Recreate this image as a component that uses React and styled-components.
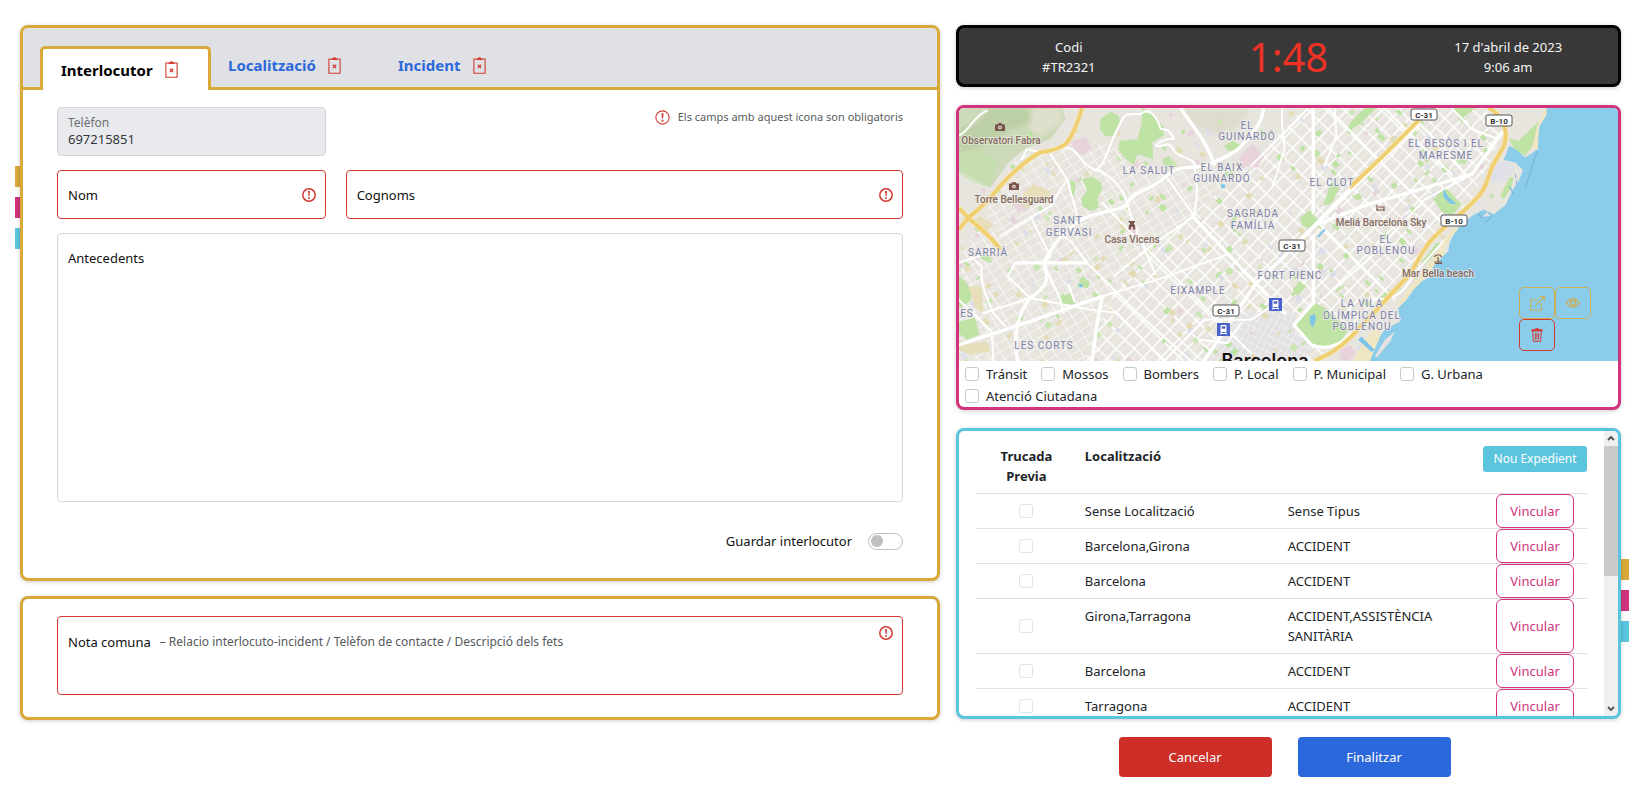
import React from "react";
import styled, { createGlobalStyle, css } from "styled-components";

const gold = "#d9a93b";
const pink = "#d1337c";
const cyan = "#5bc5de";
const red = "#d23a31";
const blue = "#2b68db";

const Global = createGlobalStyle`
  *, *::before, *::after { box-sizing: border-box; }
  body {
    margin: 0;
    background: #fff;
    color: #212529;
    font-family: "Noto Sans", "Open Sans", sans-serif;
    font-size: 13px;
    line-height: 20px;
  }
  button, input, textarea { font: inherit; color: inherit; }
  button { cursor: pointer; }
`;

/* ---------- page ---------- */

const Page = styled.div`
  position: relative;
  display: grid;
  grid-template-columns: 920fr 665fr;
  align-items: start;
  gap: 16px;
  padding: 25px 11px 20px 20px;
`;

const Column = styled.div`
  display: flex;
  flex-direction: column;
  gap: ${(p) => p.$gap}px;
  min-width: 0;
`;

const Panel = styled.section`
  border: 3px solid ${(p) => p.$color};
  border-radius: 8px;
  background: #fff;
  box-shadow: 0 1px 4px rgba(0, 0, 0, 0.2);
  overflow: hidden;
`;

const Handles = styled.nav`
  position: absolute;
  z-index: -1;
  display: flex;
  flex-direction: column;
  gap: 10px;
  ${(p) =>
    p.$side === "left"
      ? css`left: 15px; top: 166px;`
      : css`right: 3px; top: 559px;`}
`;

const Handle = styled.button`
  width: 12px;
  height: 21px;
  padding: 0;
  border: 0;
  background: ${(p) => p.$color};
`;

/* ---------- tabs ---------- */

const TabBar = styled.div`
  display: flex;
  align-items: flex-end;
  padding: 18px 17px 0;
  background: #e0e1e5;
  border-bottom: 3px solid ${gold};
`;

const Tab = styled.button`
  display: flex;
  align-items: center;
  gap: 12px;
  width: 170px;
  height: 41px;
  padding: 0 0 3px 17px;
  border: 0;
  background: none;
  color: ${blue};
  font-size: 15px;
  font-weight: 700;
  white-space: nowrap;
  ${(p) =>
    p.$active &&
    css`
      width: 171px;
      height: 44px;
      margin-bottom: -3px;
      padding: 0 0 0 18px;
      border: 3px solid ${gold};
      border-bottom: 0;
      border-radius: 5px 5px 0 0;
      background: #fff;
      color: #000;
    `}
`;

/* ---------- form ---------- */

const Form = styled.form`
  display: grid;
  grid-template-columns: repeat(12, 1fr);
  gap: 14px 20px;
  padding: 17px 34px 27px;
`;

const Cell = styled.div`
  grid-column: span ${(p) => p.$span};
  min-width: 0;
`;

const Notice = styled.p`
  display: flex;
  justify-content: flex-end;
  align-items: center;
  gap: 8px;
  margin: 0;
  color: #585b5f;
  font-size: 11px;
`;

const fieldBox = css`
  border: 1px solid ${(p) => (p.$required ? red : "#d4d6da")};
  border-radius: 4px;
  background: ${(p) => (p.$filled ? "#e9eaee" : "#fff")};
`;

const LineField = styled.div`
  ${fieldBox}
  display: flex;
  align-items: center;
  gap: 8px;
  height: 49px;
  padding: 0 9px 0 10px;
`;

const StackField = styled.div`
  ${fieldBox}
  display: flex;
  flex-direction: column;
  height: 49px;
  padding: 7px 10px 0;
`;

const AreaField = styled.div`
  ${fieldBox}
  display: flex;
  flex-direction: column;
  height: ${(p) => p.$height}px;
  padding: ${(p) => p.$top}px 9px 8px 10px;
`;

const AreaHead = styled.div`
  display: flex;
  align-items: flex-start;
  gap: 9px;
`;

const NoteHead = styled.div`
  display: flex;
  flex: 1;
  align-items: center;
  gap: 9px;
  padding-top: 6px;
`;

const Label = styled.label`
  color: ${(p) => (p.$floating ? "#6c6f75" : "#111")};
  font-size: ${(p) => (p.$floating ? 12 : 13)}px;
  line-height: ${(p) => (p.$floating ? 16 : 20)}px;
  white-space: nowrap;
`;

const Hint = styled.span`
  flex: 1;
  color: #55585c;
  font-size: 12px;
`;

const Entry = styled.input`
  flex: 1;
  min-width: 0;
  padding: 0;
  border: 0;
  outline: 0;
  background: none;
`;

const PhoneEntry = styled(Entry)`
  flex: none;
  height: 16px;
  color: #33363a;
  line-height: 16px;
`;

const Area = styled.textarea`
  flex: 1;
  padding: 0;
  border: 0;
  outline: 0;
  resize: none;
  background: none;
`;

const SwitchRow = styled.label`
  grid-column: 1 / -1;
  display: flex;
  justify-content: flex-end;
  align-items: center;
  gap: 16px;
  padding-top: 15px;
  color: #111;
`;

const Switch = styled.input`
  appearance: none;
  display: flex;
  align-items: center;
  width: 35px;
  height: 17px;
  margin: 0;
  padding: 0 2px;
  border: 1px solid #bfbfbf;
  border-radius: 9px;
  background: #fff;
  &::before {
    content: "";
    width: 12px;
    height: 12px;
    border-radius: 50%;
    background: #bfbfbf;
  }
  &:checked { justify-content: flex-end; }
`;

const NoteForm = styled.form`
  padding: 17px 34px 22px;
`;

/* ---------- call header ---------- */

const CallPanel = styled(Panel)`
  display: grid;
  grid-template-columns: repeat(3, 1fr);
  align-items: center;
  height: 62px;
  padding-top: 2px;
  background: #383838;
  color: #f4f4f4;
  text-align: center;
`;

const CallInfo = styled.div`
  display: flex;
  flex-direction: column;
`;

const Timer = styled.div`
  color: #ed3124;
  font-size: 40px;
  line-height: 48px;
`;

/* ---------- map ---------- */

const MapFrame = styled.div`
  position: relative;
  height: 253px;
`;

const MapSvg = styled.svg`
  display: block;
  width: 100%;
  height: 100%;
`;

const District = styled.text`
  font-family: Roboto, sans-serif;
  font-size: 10px;
  letter-spacing: 1px;
  text-anchor: middle;
  fill: #7a80a8;
  stroke: #f1efeb;
  stroke-width: 2px;
  stroke-opacity: 0.7;
  paint-order: stroke;
`;

const Poi = styled.text`
  font-family: Roboto, sans-serif;
  font-size: 10px;
  font-weight: 500;
  text-anchor: middle;
  fill: #856a60;
  stroke: #f1efeb;
  stroke-width: 2px;
  stroke-opacity: 0.6;
  paint-order: stroke;
`;

const City = styled.text`
  font-family: Inter, sans-serif;
  font-size: 18px;
  font-weight: 600;
  text-anchor: middle;
  fill: #111;
`;

const RoadSign = styled.text`
  font-family: Roboto, sans-serif;
  font-size: 8px;
  font-weight: 700;
  text-anchor: middle;
  fill: #333;
`;

const MapTools = styled.div`
  position: absolute;
  right: 27px;
  bottom: 10px;
  display: grid;
  grid-template-columns: 36px 36px;
`;

const ToolButton = styled.button`
  display: flex;
  align-items: center;
  justify-content: center;
  height: 32px;
  padding: 0;
  border: 1px solid ${(p) => p.$color};
  border-radius: 5px;
  background: none;
  color: ${(p) => p.$color};
`;

const Checks = styled.div`
  display: flex;
  flex-wrap: wrap;
  gap: 0 14px;
  padding: 2px 6px 0;
`;

const CheckLabel = styled.label`
  display: flex;
  align-items: center;
  gap: 7px;
  height: 22px;
  white-space: nowrap;
`;

const Box = styled.input`
  appearance: none;
  display: block;
  flex: none;
  width: 14px;
  height: 14px;
  margin: 0;
  border: 1px solid ${(p) => (p.$light ? "#e2e3e5" : "#c8c9cb")};
  border-radius: 3px;
  background: #fff;
  &:checked { background: ${blue}; }
`;

/* ---------- table ---------- */

const ListPanel = styled(Panel)`
  display: flex;
  height: 291px;
`;

const ListBody = styled.div`
  flex: 1;
  padding: 0 17px;
  overflow: hidden;
`;

const Table = styled.table`
  width: 100%;
  table-layout: fixed;
  border-collapse: separate;
  border-spacing: 0;
`;

const Col = styled.col`
  width: ${(p) => p.$w}%;
`;

const Th = styled.th`
  padding: ${(p) => (p.$action ? "15px 0 0" : "15px 8px 7px")};
  border-bottom: 1px solid #dfe1e4;
  text-align: ${(p) => (p.$center ? "center" : "left")};
  vertical-align: top;
`;

const Td = styled.td`
  height: 1px;
  padding: ${(p) => (p.$action ? "0 13px" : "7px 8px")};
  border-bottom: 1px solid #dfe1e4;
  vertical-align: ${(p) => (p.$middle ? "middle" : "top")};
`;

const CellBox = styled(Box)`
  margin: 0 auto;
`;

const LinkButton = styled.button`
  display: block;
  width: 100%;
  height: 100%;
  min-height: 34px;
  padding: 0;
  border: 1px solid ${pink};
  border-radius: 6px;
  background: #fff;
  color: ${pink};
`;

const NewButton = styled.button`
  display: block;
  width: 100%;
  height: 26px;
  padding: 0;
  border: 0;
  border-radius: 3px;
  background: ${cyan};
  color: #fff;
  font-size: 12px;
  font-weight: 400;
`;

const ScrollTrack = styled.div`
  display: flex;
  flex-direction: column;
  width: 14px;
  background: #f0f0f0;
`;

const ScrollThumb = styled.div`
  height: 130px;
  margin-bottom: auto;
  background: #cacaca;
`;

const ScrollArrow = styled.svg`
  display: block;
  width: 14px;
  height: 15px;
`;

const Actions = styled.div`
  display: flex;
  justify-content: center;
  gap: 26px;
  padding-right: 8px;
`;

const ActionButton = styled.button`
  width: 153px;
  height: 40px;
  border: 0;
  border-radius: 4px;
  background: ${(p) => p.$color};
  color: #fff;
`;

/* ---------- icons ---------- */

const ClipboardX = () => (
  <svg width="13" height="17" viewBox="0 0 13 17" fill="none" stroke={red} aria-hidden="true">
    <path d="M3 2H.9v14.2h11.2V2H10" strokeWidth="1.1" />
    <path d="M3.2 1.2h1.9L5.6.3h1.8l.5.9h1.9v1.9H3.2z" fill={red} stroke="none" />
    <path d="M4.900 7.700l3.200 3.400M8.100 7.700l-3.200 3.400" strokeWidth="1.300" />
  </svg>
);

const Alert = ({ size = 14, weight = 1.5 }) => (
  <svg width={size} height={size} viewBox="0 0 14 14" fill="none" stroke={red} aria-hidden="true">
    <circle cx="7" cy="7" r="6.200" strokeWidth={weight} />
    <path d="M6 3h2l-.5 5h-1z" fill={red} stroke="none" />
    <circle cx="7" cy="10" r="1" fill={red} stroke="none" />
  </svg>
);

const OpenIcon = () => (
  <svg width="15" height="15" viewBox="0 0 14 14" fill="none" stroke="currentColor" aria-hidden="true">
    <path d="M7.500 3.500H.7v9.800h9.900V6.500M5 9L13 1M9 .6h4.400V5" />
  </svg>
);

const EyeIcon = () => (
  <svg width="14" height="10" viewBox="0 0 14 10" fill="none" stroke="currentColor" aria-hidden="true">
    <path d="M.6 5C2.200 2.300 4.400 .8 7 .8S11.800 2.300 13.400 5C11.800 7.700 9.600 9.200 7 9.200S2.200 7.700 .6 5z" strokeWidth="1.200" />
    <circle cx="7" cy="5" r="2.600" strokeWidth="1.500" />
  </svg>
);

const TrashIcon = () => (
  <svg width="12" height="14" viewBox="0 0 12 14" fill="none" stroke="currentColor" aria-hidden="true">
    <path d="M.5 1.200h3.500L4.500 .2h3l.5 1h3.500V3.500H.5z" fill="currentColor" stroke="none" />
    <path d="M1.800 3l.5 10.300h7.400L10.200 3M4.400 5v6.500M6 5v6.500M7.600 5v6.500" />
  </svg>
);

/* ---------- map drawing ---------- */

const makePatches = () => {
  let seed = 7;
  const rnd = () => {
    seed = (seed * 16807) % 2147483647;
    return seed / 2147483647;
  };
  const fills = ["#bfe2a5", "#bfe2a5", "#bfe2a5", "#c9e6b3", "#e4dcb6", "#e4dcb6", "#e6d3dc", "#dcdeea"];
  return Array.from({ length: 420 }, (_, i) => ({
    key: i,
    x: 30 + rnd() * 1620,
    y: 30 + rnd() * 750,
    w: 6 + rnd() * 16,
    h: 6 + rnd() * 14,
    fill: fills[Math.floor(rnd() * fills.length)],
  }));
};
const patches = makePatches();

const parks = [
  "M450 60L480 38L505 50L508 75L490 110L465 112L448 90z",
  "M575 27L600 40L640 85L638 110L605 130L608 180L560 165L550 197L520 175L503 150L508 125L560 120L572 75z",
  "M396 240L425 232L452 250L455 270L440 300L445 325L420 335L395 320L392 295L410 275z",
  "M360 240L375 250L372 290L362 285z",
  "M26 530C55 545 70 580 60 605L30 625L26 620z",
  "M26 665L75 655L88 705L50 720L26 700z",
  "M378 560L398 530L418 548L412 565z",
  "M1028 675L1088 607L1120 625L1190 690L1175 715C1150 745 1100 745 1080 733z",
  "M1045 355L1075 333L1100 360L1075 388L1055 380z",
  "M1115 320L1140 245L1165 262L1142 312z",
  "M1445 300L1480 262L1530 315L1500 350L1470 338z",
  "M1670 118L1700 125L1760 66L1765 75L1738 145L1720 170L1690 155z",
  "M1408 490L1455 430L1470 430L1440 475L1420 495z",
  "M1645 290L1672 235L1685 235L1678 265L1655 300z",
  "M1025 570L1045 545L1065 560L1040 590z",
  "M1500 27L1570 27L1530 60z",
  "M820 140L845 125L870 140L860 155L830 155z",
  "M1185 95L1200 65L1240 27L1275 27L1220 80z",
  "M330 595L360 580L375 612L335 620z",
  "M1280 600L1310 570L1330 580L1300 615z",
  "M225 105L245 95L250 140L232 135z",
  "M85 455L120 470L125 490L95 480z",
  "M635 180L655 170L668 195L645 212z",
];

const tans = [
  "M220 280L250 255L300 275L295 305L260 300L230 330L210 310z",
  "M60 370L90 350L130 375L100 405z",
  "M26 735L110 725L120 755L60 765L26 750z",
  "M55 560L95 560L100 640L75 625z",
  "M1630 600L1650 590L1655 610z",
];

const pinks = [
  "M360 130L405 112L425 145L400 168L375 155z",
  "M865 175L905 135L938 170L920 205L870 200z",
  "M185 310L215 315L230 330L205 340z",
  "M1165 750L1195 735L1215 760L1190 783L1170 780z",
  "M90 265L110 270L100 285z",
];

const highways = [
  "M395 27C385 60 370 110 345 135C320 155 290 155 270 160C240 175 190 215 150 260C120 300 80 335 55 355L26 390",
  "M26 325L55 355C80 380 125 410 150 450",
  "M1405 60L1290 175L1195 265",
  "M1610 27C1640 40 1658 70 1662 105C1662 145 1645 155 1622 200C1603 240 1610 265 1560 312C1500 370 1450 400 1425 440C1395 480 1390 510 1360 540C1320 580 1250 660 1200 710C1160 750 1130 765 1090 783",
];

const avenues = [
  "M395 360C430 340 500 335 525 318C550 270 600 275 640 235C690 190 730 212 770 197C810 180 860 160 880 130C920 90 935 60 937 27",
  "M690 27C720 80 760 110 790 195",
  "M195 490L410 490",
  "M26 735L240 665L455 590",
  "M240 595C200 640 188 720 202 783",
  "M240 595C290 560 300 540 280 490C300 450 330 400 395 360",
  "M455 590L438 680L425 783",
  "M1086 27L1086 340M1086 410L1086 610",
  "M725 350L870 505L1000 640",
  "M990 480L1110 360L1400 75",
  "M1110 370L1250 315L1560 225L1650 100",
  "M1028 675L1088 607M1028 675L1080 735C1110 748 1160 748 1200 700",
  "M760 783L915 550L1000 470L1350 110L1430 27",
];

const streets = [
  "M435 215C470 190 475 130 510 72C520 40 540 45 570 45C600 20 620 60 630 90C660 90 665 110 670 120C650 115 620 130 615 140C640 145 655 120 670 155C690 180 720 170 735 200",
  "M345 145C380 145 385 190 430 210C470 220 520 260 530 315L560 400L615 525",
  "M26 110C60 95 70 50 110 35",
  "M345 145C330 155 270 165 230 150L215 180",
  "M455 590L620 540L830 465",
  "M100 640L240 595L420 630L500 640L640 783",
  "M300 165L350 240L380 345",
  "M410 490L365 430L330 400",
  "M60 470L95 500C90 560 110 590 130 640L165 680",
  "M26 600L125 695L130 783",
  "M145 455L100 465L26 490",
  "M240 350L300 470L280 490",
  "M150 410L240 355L300 320L350 240",
  "M195 490L172 530L240 595",
  "M280 490L330 600L340 640",
  "M730 200C745 270 735 310 730 350L600 440L490 530",
  "M645 230L730 350",
  "M640 783L760 660L900 660L960 620",
  "M995 27C985 60 1000 120 1000 150L965 260",
  "M1150 27L1155 110L1120 200",
  "M900 200L1020 80L1070 27",
  "M355 555L372 605",
  "M410 490L560 640L720 783",
  "M455 310L600 460L740 600L900 760",
  "M1300 27L1420 150L1500 225",
  "M1390 60L1480 150L1540 225",
  "M1500 27L1560 90L1640 120",
  "M1130 27L1250 150L1400 300L1470 370",
  "M1100 370L1240 510L1330 600",
  "M1110 600L1250 480L1420 300L1560 225",
  "M1250 600C1330 600 1350 590 1390 520L1480 420",
  "M745 720L830 730L870 670",
];

const sea =
  "M1785 27L1780 45L1755 80L1758 105L1757 150L1720 175L1690 150L1672 140L1655 182L1690 190L1713 212L1700 245L1683 270L1660 318L1625 345L1595 330L1560 350L1520 385L1508 400L1492 435L1490 455L1478 465L1445 500L1440 530L1410 545L1385 570L1365 600L1340 625L1345 665L1300 690L1270 725L1235 765L1210 783H2010V27z";

const beach =
  "M1780 27L1785 45L1762 82L1760 100L1757 150L1740 150L1755 80z M1500 390L1520 388L1505 405L1475 450L1480 462L1445 500L1430 520L1410 545L1385 570L1360 605L1330 625L1380 555L1420 510z M1280 675L1240 720L1205 783H1255L1290 700z";

const districts = [
  [288, 21, "EL"], [288, 32, "GUINARDÓ"], [190, 66, "LA SALUT"],
  [263, 63, "EL BAIX"], [263, 74, "GUINARDÓ"],
  [109, 116, "SANT"], [110, 128, "GERVASI"], [29, 148, "SARRIÀ"],
  [294, 109, "SAGRADA"], [294, 121, "FAMÍLIA"], [239, 186, "EIXAMPLE"],
  [331, 171, "FORT PIENC"], [8, 209, "ES"], [85, 241, "LES CORTS"],
  [373, 78, "EL CLOT"], [487, 39, "EL BESÒS I EL"], [487, 51, "MARESME"],
  [427, 135, "EL"], [427, 146, "POBLENOU"],
  [403, 199, "LA VILA"], [403, 211, "OLÍMPICA DEL"], [403, 222, "POBLENOU"],
];

const pois = [
  [42, 36, "Observatori Fabra"], [55, 95, "Torre Bellesguard"],
  [173, 135, "Casa Vicens"], [422, 118, "Meliá Barcelona Sky"],
  [479, 169, "Mar Bella beach"],
];

const signs = [
  [254, 197, "C-31"], [320, 132, "C-31"], [452, 1, "C-31"], [527, 7, "B-10"], [482, 107, "B-10"],
];

const Camera = ({ x, y }) => (
  <g transform={`translate(${x} ${y})`}>
    <path d="M0 1.500h2.500L3.500 0h3l1 1.500H10V8H0z" fill="#7a5549" />
    <circle cx="5" cy="4.600" r="1.800" fill="#f1efeb" />
    <circle cx="5" cy="4.600" r=".8" fill="#7a5549" />
  </g>
);

const Train = ({ x, y }) => (
  <g transform={`translate(${x} ${y})`}>
    <rect width="13" height="13" fill="#4a63cc" />
    <rect x="3.500" y="2" width="6" height="7" rx="1" fill="#fff" />
    <rect x="4.700" y="3.300" width="3.600" height="2.400" fill="#4a63cc" />
    <path d="M4.500 9l-1.200 2.500M8.500 9l1.200 2.500M3.800 10.500h5.400" stroke="#fff" fill="none" />
  </g>
);

const CityMap = () => (
  <MapSvg viewBox="0 0 659 253" preserveAspectRatio="xMidYMid slice" role="img" aria-label="Mapa de Barcelona">
    <defs>
      <pattern id="blocks" width="38" height="38" patternUnits="userSpaceOnUse" patternTransform="rotate(44)">
        <path d="M0 0H38M0 0V38" stroke="#fff" strokeWidth="9" />
        <path d="M19 0V38" stroke="#f5f3f0" strokeWidth="2" />
      </pattern>
      <pattern id="lanes" width="24" height="34" patternUnits="userSpaceOnUse" patternTransform="rotate(58)">
        <path d="M0 0H24M0 0V34" stroke="#f8f7f5" strokeWidth="5" />
      </pattern>
      <pattern id="old" width="17" height="22" patternUnits="userSpaceOnUse" patternTransform="rotate(28)">
        <path d="M0 0H17M0 0V22" stroke="#f4f3f4" strokeWidth="4" />
      </pattern>
      <filter id="soft"><feGaussianBlur stdDeviation="8" /></filter>
    </defs>
    <g transform="translate(-9 -9) scale(.3345)">
      <rect x="20" y="20" width="2000" height="780" fill="#e8e5df" />
      <path d="M690 27H900L860 90L780 110L730 80z" fill="#dfdccf" filter="url(#soft)" />
      <path d="M200 170L460 130L640 220L900 200L700 370L500 560L400 783H26V480z" fill="url(#lanes)" />
      <path d="M400 783L500 560L720 350L900 190L1060 27H1600L1650 110L1560 300L1400 470L1180 700L1090 783z" fill="url(#blocks)" />
      <path d="M860 650L1010 620L1090 730L1060 783H760z" fill="#e3e1e2" />
      <path d="M860 650L1010 620L1090 730L1060 783H760z" fill="url(#old)" />
      {patches.map((p) => (
        <rect key={p.key} x={p.x} y={p.y} width={p.w} height={p.h} fill={p.fill} transform={`rotate(44 ${p.x} ${p.y})`} />
      ))}
      <path d="M26 27H335L345 60L300 120L230 145L175 190L120 265L26 210z" fill="#cddab9" />
      <path d="M120 27H230L250 70L180 90L130 130L26 160V90L90 70z" fill="#bccfa6" filter="url(#soft)" />
      <path d="M250 27H335L330 70L270 110L235 90z" fill="#dfe0cc" filter="url(#soft)" />
      <path d="M26 160L90 150L140 190L120 265L60 245L26 220z" fill="#c0e0a8" opacity=".6" />
      {parks.map((d) => <path key={d} d={d} fill="#bfe2a5" />)}
      {tans.map((d) => <path key={d} d={d} fill="#e6dfba" />)}
      {pinks.map((d) => <path key={d} d={d} fill="#e8d3da" />)}
      <path d="M1630 195C1650 180 1680 190 1690 205L1660 245L1625 250L1610 235z" fill="#dfe0e8" />
      <g fill="none" stroke="#fff" strokeLinejoin="round" strokeLinecap="round">
        {streets.map((d) => <path key={d} d={d} strokeWidth="6" />)}
        {avenues.map((d) => <path key={d} d={d} strokeWidth="10" />)}
      </g>
      <path d={sea} fill="#8bcceb" />
      <path d={beach} fill="#efe6c4" />
      <path d="M1755 155L1720 265M1690 225L1695 255M1672 260L1685 285M1580 345L1590 355L1615 340M1600 370L1620 350" stroke="#79aede" strokeWidth="3" fill="none" />
      <path d="M1685 240l12 -10l4 16zM1590 352l18 -14l6 12zM1270 770l30 -50l30 -25l-14 30l-40 48z" fill="#e3e1e2" />
      <path d="M1475 268l15 25l25 22l-20 -2l-20 -20z M1076 650l14 -8l4 15l-8 25l-10 -10z M1098 410l20 -22l5 4l-20 22z M810 255h12v12h-12z M386 553h10v10h-10z M1230 710l40 40l-10 6l-40 -36z" fill="#7cc6ea" />
      <g fill="none" strokeLinejoin="round">
        {highways.map((d) => <path key={d} d={d} stroke="#f6e6ae" strokeWidth="15" />)}
        {highways.map((d) => <path key={d} d={d} stroke="#f0ce72" strokeWidth="11" />)}
      </g>
    </g>
    {districts.map(([x, y, t]) => <District key={`${x}-${y}`} x={x} y={y}>{t}</District>)}
    {pois.map(([x, y, t]) => <Poi key={t} x={x} y={y}>{t}</Poi>)}
    {signs.map(([x, y, t]) => (
      <g key={`${x}-${y}`}>
        <rect x={x} y={y} width="26" height="11" rx="2" fill="#fff" stroke="#555" />
        <RoadSign x={x + 13} y={y + 9}>{t}</RoadSign>
      </g>
    ))}
    <Camera x={36} y={15} />
    <Camera x={50} y={74} />
    <Train x={258} y={215} />
    <Train x={310} y={190} />
    <path d="M169 113h7v1.500h-1v2h1l.5 5h-2.500v-2.500h-2v2.500h-2.500l.5-5h1v-2h-1z" fill="#7a5549" />
    <path d="M418 97v6M418 102h7v-3h-4M425 99v4M419.500 99h1.500" stroke="#7a5549" strokeWidth="1.200" fill="none" />
    <path d="M475 154h8M479 154v-5M475.500 149c1-3 6-3 7 0M476 155.500h7" stroke="#7a5549" strokeWidth="1.200" fill="none" />
    <City x="306" y="259">Barcelona</City>
  </MapSvg>
);

/* ---------- data ---------- */

const agencies = ["Tránsit", "Mossos", "Bombers", "P. Local", "P. Municipal", "G. Urbana", "Atenció Ciutadana"];

const calls = [
  ["Sense Localització", "Sense Tipus"],
  ["Barcelona,Girona", "ACCIDENT"],
  ["Barcelona", "ACCIDENT"],
  ["Girona,Tarragona", "ACCIDENT,ASSISTÈNCIA SANITÀRIA"],
  ["Barcelona", "ACCIDENT"],
  ["Tarragona", "ACCIDENT"],
];

const tabs = ["Interlocutor", "Localització", "Incident"];
const sections = [["groc", gold], ["rosa", pink], ["blau", cyan]];

const SideHandles = ({ side }) => (
  <Handles $side={side} aria-label="Seccions">
    {sections.map(([name, color]) => (
      <Handle key={name} type="button" $color={color} aria-label={name} />
    ))}
  </Handles>
);

export default function App() {
  return (
    <>
      <Global />
      <Page>
        <SideHandles side="left" />
        <SideHandles side="right" />

        <Column $gap={15}>
          <Panel $color={gold}>
            <TabBar role="tablist">
              {tabs.map((name, i) => (
                <Tab key={name} type="button" role="tab" aria-selected={i === 0} $active={i === 0}>
                  {name}
                  <ClipboardX />
                </Tab>
              ))}
            </TabBar>
            <Form>
              <Cell $span={4}>
                <StackField $filled>
                  <Label $floating htmlFor="phone">Telèfon</Label>
                  <PhoneEntry id="phone" defaultValue="697215851" readOnly />
                </StackField>
              </Cell>
              <Cell $span={8}>
                <Notice>
                  <Alert size={15} weight={1} />
                  Els camps amb aquest icona son obligatoris
                </Notice>
              </Cell>
              <Cell $span={4}>
                <LineField $required>
                  <Label htmlFor="name">Nom</Label>
                  <Entry id="name" />
                  <Alert />
                </LineField>
              </Cell>
              <Cell $span={8}>
                <LineField $required>
                  <Label htmlFor="surname">Cognoms</Label>
                  <Entry id="surname" />
                  <Alert />
                </LineField>
              </Cell>
              <Cell $span={12}>
                <AreaField $height={269} $top={14}>
                  <AreaHead>
                    <Label htmlFor="background">Antecedents</Label>
                  </AreaHead>
                  <Area id="background" />
                </AreaField>
              </Cell>
              <SwitchRow>
                Guardar interlocutor
                <Switch type="checkbox" role="switch" />
              </SwitchRow>
            </Form>
          </Panel>

          <Panel $color={gold}>
            <NoteForm>
              <AreaField $required $height={79} $top={9}>
                <AreaHead>
                  <NoteHead>
                    <Label htmlFor="note">Nota comuna</Label>
                    <Hint>– Relacio interlocuto-incident / Telèfon de contacte / Descripció dels fets</Hint>
                  </NoteHead>
                  <Alert />
                </AreaHead>
                <Area id="note" />
              </AreaField>
            </NoteForm>
          </Panel>
        </Column>

        <Column $gap={18}>
          <CallPanel $color="#000">
            <CallInfo>
              <span>Codi</span>
              <span>#TR2321</span>
            </CallInfo>
            <Timer>1:48</Timer>
            <CallInfo>
              <span>17 d'abril de 2023</span>
              <span>9:06 am</span>
            </CallInfo>
          </CallPanel>

          <Panel $color={pink}>
            <MapFrame>
              <CityMap />
              <MapTools>
                <ToolButton type="button" $color="#cdae55" aria-label="Obrir mapa"><OpenIcon /></ToolButton>
                <ToolButton type="button" $color="#cdae55" aria-label="Veure"><EyeIcon /></ToolButton>
                <ToolButton type="button" $color={red} aria-label="Esborrar"><TrashIcon /></ToolButton>
              </MapTools>
            </MapFrame>
            <Checks>
              {agencies.map((name) => (
                <CheckLabel key={name}>
                  <Box type="checkbox" />
                  {name}
                </CheckLabel>
              ))}
            </Checks>
          </Panel>

          <ListPanel $color={cyan}>
            <ListBody>
              <Table>
                <colgroup>
                  <Col $w={16.5} />
                  <Col $w={33.2} />
                  <Col $w={33.3} />
                  <Col $w={17} />
                </colgroup>
                <thead>
                  <tr>
                    <Th $center>Trucada Previa</Th>
                    <Th colSpan={2}>Localització</Th>
                    <Th $action><NewButton type="button">Nou Expedient</NewButton></Th>
                  </tr>
                </thead>
                <tbody>
                  {calls.map(([place, kind], i) => (
                    <tr key={i}>
                      <Td $middle><CellBox $light type="checkbox" aria-label={`Trucada previa ${place}`} /></Td>
                      <Td>{place}</Td>
                      <Td>{kind}</Td>
                      <Td $action><LinkButton type="button">Vincular</LinkButton></Td>
                    </tr>
                  ))}
                </tbody>
              </Table>
            </ListBody>
            <ScrollTrack>
              <ScrollArrow viewBox="0 0 14 15"><path d="M4 9l3-3 3 3" fill="none" stroke="#505050" strokeWidth="1.800" /></ScrollArrow>
              <ScrollThumb />
              <ScrollArrow viewBox="0 0 14 15"><path d="M4 6l3 3 3-3" fill="none" stroke="#505050" strokeWidth="1.800" /></ScrollArrow>
            </ScrollTrack>
          </ListPanel>

          <Actions>
            <ActionButton type="button" $color="#cd2f28">Cancelar</ActionButton>
            <ActionButton type="button" $color={blue}>Finalitzar</ActionButton>
          </Actions>
        </Column>
      </Page>
    </>
  );
}
